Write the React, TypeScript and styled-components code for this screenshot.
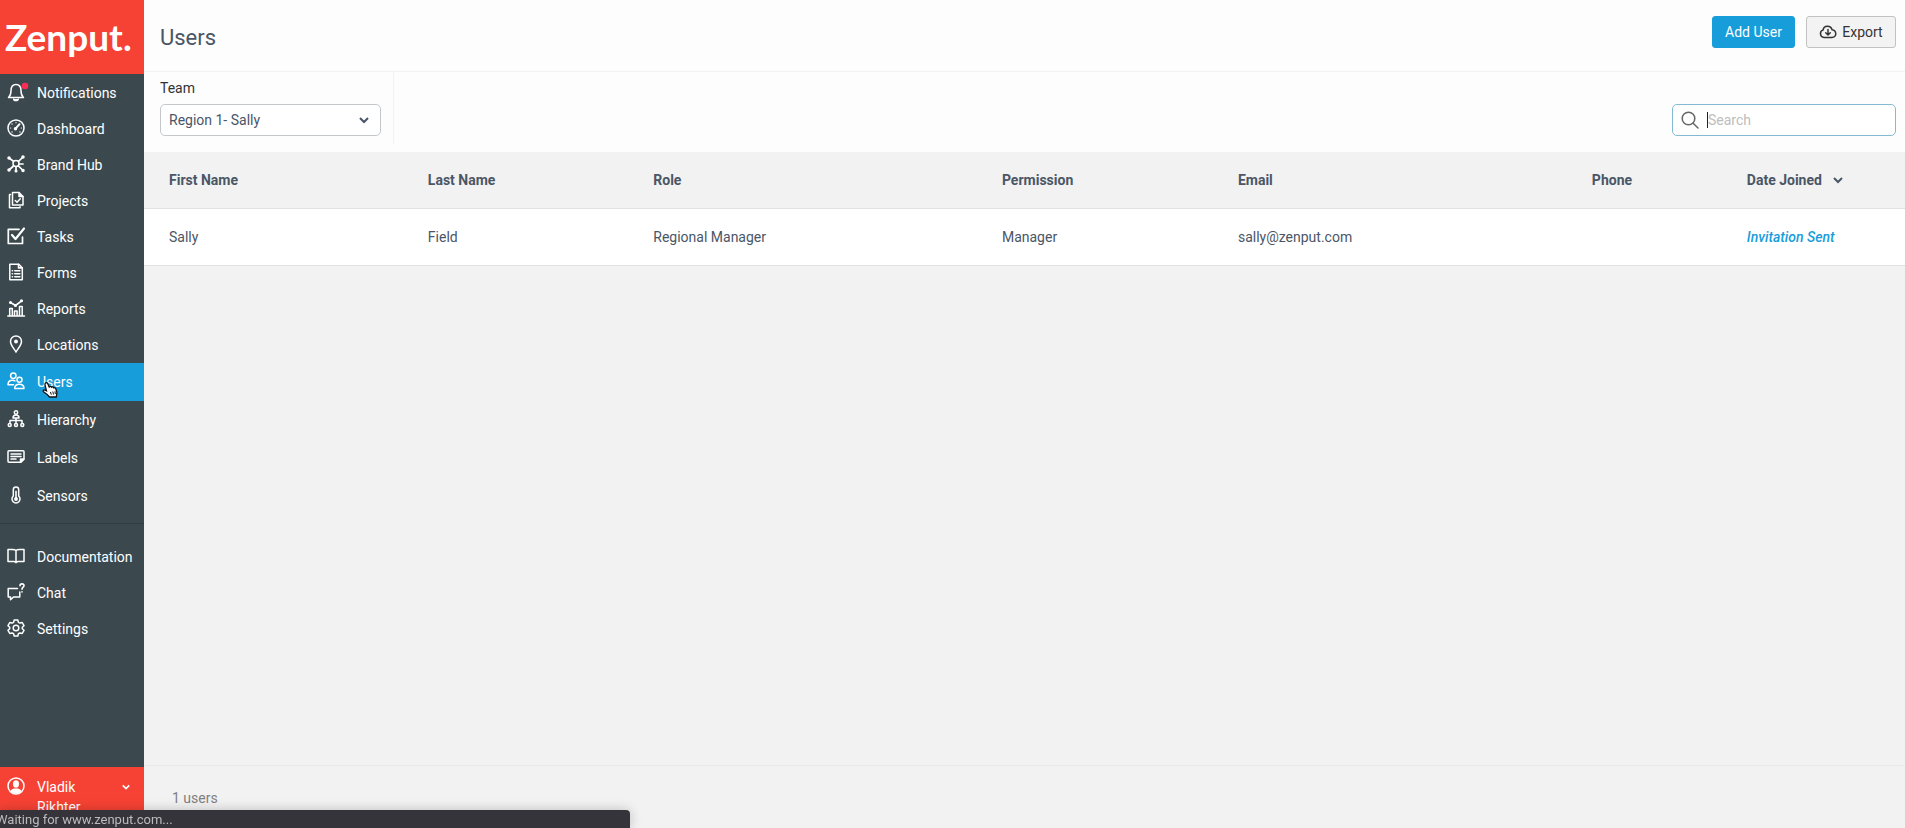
import React from 'react';
import styled, { createGlobalStyle } from 'styled-components';

const GlobalStyle = createGlobalStyle`
  * { box-sizing: border-box; }
  body { margin: 0; background: #f2f2f2; color: #4a5666; font: 14px/20px Roboto, "Liberation Sans", sans-serif; }
  button, input, select { font: inherit; margin: 0; }
`;

const Page = styled.div`
  display: flex;
  min-height: 100vh;
`;

const Sidebar = styled.aside`
  display: flex;
  flex-direction: column;
  flex: none;
  width: 144px;
  background: #3b494f;
  color: #fff;
`;

const Logo = styled.a`
  display: flex;
  align-items: center;
  height: 74px;
  padding-left: 5px;
  background: #f64234;
  color: #fff;
  font: 700 37px/44px Lato, sans-serif;
  text-decoration: none;
`;

const Nav = styled.nav`
  display: flex;
  flex-direction: column;
  flex: 1;
  padding-top: 1px;
`;

const NavList = styled.ul`
  list-style: none;
  margin: 0;
  padding: 0;
`;

const Divider = styled.hr`
  width: 100%;
  margin: 8px 0 15px;
  border: 0;
  border-top: 1px solid #303c41;
`;

const NavLink = styled.a<{ $active?: boolean; $tall?: boolean }>`
  position: relative;
  display: flex;
  align-items: center;
  gap: 12px;
  height: ${(p) => (p.$tall ? 38 : 36)}px;
  padding-left: 7px;
  background: ${(p) => (p.$active ? '#189ddb' : 'transparent')};
  color: #fff;
  font-size: 14px;
  text-decoration: none;
`;

const Glyph = styled.svg`
  flex: none;
  width: 18px;
  height: 18px;
  fill: none;
  stroke: currentColor;
  stroke-width: 1.5;
  stroke-linecap: round;
  stroke-linejoin: round;
`;

const NavGlyph = styled(Glyph)`
  margin-bottom: 3px;
`;

const Pointer = styled.svg`
  position: absolute;
  left: 42px;
  top: 18px;
  width: 17px;
  height: 18px;
`;

const Account = styled.button`
  display: flex;
  align-items: flex-start;
  gap: 12px;
  height: 61px;
  padding: 10px 14px 0 7px;
  border: 0;
  background: #f64234;
  color: #fff;
  text-align: left;
`;

const AccountName = styled.span`
  flex: 1;
  padding-right: 18px;
  line-height: 20px;
`;

const SmallChevron = styled.svg<{ $size: number }>`
  flex: none;
  width: ${(p) => p.$size}px;
  height: 20px;
  fill: none;
  stroke: currentColor;
  stroke-width: 2;
`;

const Main = styled.main`
  display: flex;
  flex-direction: column;
  flex: 1;
  min-width: 0;
`;

const Header = styled.header`
  display: flex;
  justify-content: space-between;
  height: 72px;
  padding: 16px 9px 0 16px;
  border-bottom: 1px solid #f0f2f3;
  background: #fdfdfd;
`;

const Title = styled.h1`
  margin: 8px 0 0;
  font-size: 22px;
  font-weight: 400;
  line-height: 28px;
`;

const Actions = styled.div`
  display: flex;
  gap: 11px;
`;

const Button = styled.button<{ $primary?: boolean }>`
  display: flex;
  align-items: center;
  justify-content: center;
  gap: 5px;
  min-width: ${(p) => (p.$primary ? 83 : 90)}px;
  height: 32px;
  padding: 0 12px;
  border: 1px solid ${(p) => (p.$primary ? '#189ddb' : '#c2c2c2')};
  border-radius: 3px;
  background: ${(p) => (p.$primary ? '#189ddb' : '#f3f3f3')};
  color: ${(p) => (p.$primary ? '#fff' : '#333')};
`;

const Filters = styled.div`
  display: flex;
  justify-content: space-between;
  height: 80px;
  padding: 0 9px 8px 16px;
  background: #fdfdfd;
`;

const TeamFilter = styled.div`
  display: flex;
  flex-direction: column;
  gap: 6px;
  padding: 6px 12px 0 0;
  border-right: 1px solid #eff3f4;
`;

const TeamLabel = styled.label`
  color: #333;
`;

const SelectBox = styled.div`
  display: grid;
  align-items: center;
  width: 221px;
  > * { grid-area: 1 / 1; }
  > svg { justify-self: end; margin-right: 12px; pointer-events: none; }
`;

const Select = styled.select`
  appearance: none;
  width: 100%;
  height: 32px;
  padding: 0 30px 0 8px;
  border: 1px solid #c4c7ca;
  border-radius: 5px;
  background: #fff;
  color: #4a5666;
`;

const SearchBox = styled.label`
  display: flex;
  align-items: center;
  width: 224px;
  height: 32px;
  margin-top: 32px;
  padding-left: 8px;
  border: 1px solid #84b9d2;
  border-radius: 5px;
  background: #fff;
  color: #666;
`;

const Caret = styled.span`
  width: 1px;
  height: 16px;
  margin-left: 8px;
  background: #222;
`;

const SearchInput = styled.input`
  flex: 1;
  min-width: 0;
  padding: 0;
  border: 0;
  outline: 0;
  background: transparent;
  &::placeholder { color: #bdbdbd; opacity: 1; }
`;

const Table = styled.table`
  width: 100%;
  table-layout: fixed;
  border-collapse: separate;
  border-spacing: 0;
`;

const Column = styled.col<{ $share?: number }>`
  width: ${(p) => (p.$share ? `${p.$share}%` : 'auto')};
`;

const HeadCell = styled.th`
  height: 57px;
  padding: 0 0 0 25px;
  border-bottom: 1px solid #e0e2e4;
  font-weight: 700;
  text-align: left;
`;

const Cell = styled.td`
  height: 57px;
  padding: 0 0 0 25px;
  border-bottom: 1px solid #e0e2e4;
  background: #fff;
`;

const SortButton = styled.button`
  display: flex;
  gap: 11px;
  padding: 0;
  border: 0;
  background: none;
  color: inherit;
  font-weight: 700;
`;

const Invitation = styled.a`
  color: #189ddb;
  font-style: italic;
  font-weight: 500;
  text-decoration: none;
`;

const Footer = styled.footer`
  height: 63px;
  margin-top: auto;
  padding: 22px 28px;
  border-top: 1px solid #e9e9e9;
  color: #808080;
`;

const StatusBar = styled.div`
  position: fixed;
  left: 0;
  bottom: 0;
  width: 630px;
  max-width: 100%;
  height: 18px;
  overflow: hidden;
  border-top-right-radius: 4px;
  background: #35343a;
  box-shadow: 0 0 12px rgba(0, 0, 0, 0.22);
  color: #bbb;
  font-size: 13px;
  line-height: 20px;
  text-indent: -4px;
`;

const icons: Record<string, React.ReactNode> = {
  Notifications: (
    <>
      <path d="M1.500 14.500c2-1.600 2.500-3.200 2.500-6.700C4 4 6 1.500 9 1.500s5 2.500 5 6.300c0 3.500.5 5.100 2.500 6.700Z" />
      <path d="M6.700 16a2.300 1.600 0 0 0 4.600 0" fill="currentColor" />
      <circle cx="18" cy="3" r="3.300" fill="#fb2f53" stroke="none" />
    </>
  ),
  Dashboard: (
    <>
      <circle cx="9" cy="9" r="8" />
      <path d="m8.500 9.700 4-4.500" strokeWidth="2" />
      <path d="M9 3.500v.2M5 5l.1.1M3.500 9h.2M14.300 9h.2M5 13l.1-.1M13 13l-.1-.1" strokeWidth="1.200" />
      <circle cx="8.500" cy="9.700" r="1" fill="currentColor" />
    </>
  ),
  'Brand Hub': (
    <>
      <circle cx="9" cy="8.500" r="3" />
      <path d="M6.500 6.300 2 3M11.500 6.300 16 2M6.500 11 2 15M11.500 11l4.500 4.500M9 11.700V16M12 9h4" strokeWidth="1.700" />
      <g fill="currentColor">
        <circle cx="2" cy="3" r="1" />
        <circle cx="16" cy="2" r="1" />
        <circle cx="2" cy="15" r="1" />
        <circle cx="16" cy="15.500" r="1" />
        <circle cx="9" cy="16" r=".8" />
      </g>
    </>
  ),
  Projects: (
    <>
      <path d="M5.500 1.500H12l4 4V14H5.500Z" />
      <path d="M12 1.500v4h4" fill="currentColor" />
      <path d="M3.500 3.500h-1v13.300h10.500v-1M8.300 9.500l1.700 1.700 3.300-3.500" />
    </>
  ),
  Tasks: (
    <>
      <path d="M12 2.300H1.300v14.200h14.200V10" strokeWidth="1.700" />
      <path d="m5 8 3.500 4L17 1.500" strokeWidth="2.200" />
    </>
  ),
  Forms: (
    <>
      <path d="M2.800 1.200h9l3.500 3.500v12H2.800Z" />
      <path d="M11.500 1.200v3.700h3.800M5.300 7.700h.2M7.800 7.700h5M5.300 10.700h.2M7.800 10.700h5M5.300 13.700h.2M7.800 13.700h5" strokeWidth="1.600" />
    </>
  ),
  Reports: (
    <>
      <path d="M.8 17h16.700M2.700 17V9.500h2.600V17M7.500 17v-5h2.600v5M12.500 17V7.500h2.700V17" />
      <path d="m3.500 3.500 5 3 6-4.500" strokeWidth="1.600" />
      <g fill="currentColor">
        <circle cx="3.500" cy="3.500" r=".8" />
        <circle cx="8.500" cy="6.500" r=".8" />
        <circle cx="14.500" cy="1.800" r=".8" />
      </g>
    </>
  ),
  Locations: (
    <>
      <path d="M9 17C6.500 13 3.500 9.700 3.500 6.400a5.500 5.500 0 0 1 11 0C14.500 9.700 11.500 13 9 17Z" />
      <circle cx="9" cy="6.500" r="1.200" fill="currentColor" />
    </>
  ),
  Users: (
    <>
      <circle cx="6.300" cy="3.800" r="2.700" />
      <circle cx="12.500" cy="7.800" r="2.500" />
      <path d="M6.500 12.800H1c0-3.300 1.800-4.500 4.500-4.500 1 0 1.800.2 2.500.6M7.700 16.500c0-3.300 1.700-4.300 4.600-4.300s4.700 1 4.700 4.300Z" />
    </>
  ),
  Hierarchy: (
    <>
      <circle cx="9" cy="2.500" r="1.700" />
      <path d="M6 8c0-2.300 1-3 3-3s3 .7 3 3ZM9 8v5M3 13v-2.500h12V13" />
      <circle cx="2.700" cy="15" r="1.500" />
      <circle cx="9" cy="15" r="1.500" />
      <circle cx="15.300" cy="15" r="1.500" />
    </>
  ),
  Labels: (
    <>
      <path d="M2 2.800h14a1 1 0 0 1 1 1v7.400l-3 3H2a1 1 0 0 1-1-1V3.800a1 1 0 0 1 1-1Z" />
      <path d="M4 6h10M4 8.500h10M4 11h5" />
      <path d="M13.500 14v-3h3.300Z" fill="currentColor" />
    </>
  ),
  Sensors: (
    <>
      <path d="M6.300 10V3.700a2.700 2.700 0 0 1 5.400 0V10a4 4 0 1 1-5.400 0Z" />
      <path d="M9 5.500V13" strokeWidth="1.600" />
      <circle cx="9" cy="13" r="1.200" fill="currentColor" />
    </>
  ),
  Documentation: <path d="M9 3.500C8 2.500 7 2.500 5.500 2.500H1v12h6c1 0 2 .4 2 1.200 0-.8 1-1.200 2-1.200h6v-12h-4.500C11 2.500 10 2.500 9 3.500Zm0 0v12" />,
  Chat: (
    <>
      <path d="M10.500 5.500H1.200V14h2.300v2.800L6.500 14h6.300V9" />
      <path d="M13 2.700c0-2.500 4-2.500 4 0 0 1.500-2 1.500-2 3.500M15 8.800v.1" strokeWidth="1.600" />
    </>
  ),
  Settings: (
    <>
      <path d="M7.200 1h3.600l.6 2.300 1.500.8 2.300-.6L17 6.700 15.300 8.300v1.400L17 11.300l-1.800 3.200-2.300-.6-1.500.8-.6 2.300H7.200l-.6-2.300-1.500-.8-2.300.6L1 11.300l1.700-1.600V8.300L1 6.700l1.800-3.200 2.300.6 1.500-.8Z" />
      <circle cx="9" cy="9" r="2.800" />
    </>
  ),
};

const mainItems = ['Notifications', 'Dashboard', 'Brand Hub', 'Projects', 'Tasks', 'Forms', 'Reports', 'Locations'];
const adminItems = ['Users', 'Hierarchy', 'Labels', 'Sensors'];
const helpItems = ['Documentation', 'Chat', 'Settings'];
const headings = ['First Name', 'Last Name', 'Role', 'Permission', 'Email', 'Phone'];

function NavItem({ name, tall }: { name: string; tall?: boolean }) {
  const active = name === 'Users';
  return (
    <li>
      <NavLink href={`#${name.toLowerCase().replace(' ', '-')}`} $active={active} $tall={tall} aria-current={active ? 'page' : undefined}>
        <NavGlyph viewBox="0 0 18 18" overflow="visible" aria-hidden="true">{icons[name]}</NavGlyph>
        {name}
        {active && (
          <Pointer viewBox="0 0 17 18" aria-hidden="true">
            <path d="M3.500 2c1-.8 2 0 2.400 1l1.300 3c.8-.9 1.900-.6 2.300.2.900-.6 1.800-.3 2.200.6 1-.4 1.900.1 2.200 1.200l1 3.500-.6 4.500H7.500C5.700 13.500 3.500 12 1.500 10.700c-.8-.6-.2-2 1-1.700l2 .8L3 4c-.2-.8 0-1.500.5-2Z" fill="#fff" stroke="#111" strokeWidth="1.300" />
            <path d="m8.500 11 .8 2.700M10.800 10.500l.7 3M13 10.300l.3 2.700" stroke="#111" />
          </Pointer>
        )}
      </NavLink>
    </li>
  );
}

function Chevron({ size }: { size: number }) {
  return (
    <SmallChevron $size={size} viewBox="0 0 10 20" aria-hidden="true">
      <path d="m1 8 4 4 4-4" />
    </SmallChevron>
  );
}

export default function App() {
  return (
    <>
      <GlobalStyle />
      <Page>
        <Sidebar>
          <Logo href="#home">Zenput.</Logo>
          <Nav>
            <NavList>
              {mainItems.map((n) => <NavItem key={n} name={n} />)}
              {adminItems.map((n) => <NavItem key={n} name={n} tall />)}
            </NavList>
            <Divider />
            <NavList>{helpItems.map((n) => <NavItem key={n} name={n} />)}</NavList>
          </Nav>
          <Account type="button">
            <Glyph viewBox="0 0 18 18" aria-hidden="true">
              <circle cx="9" cy="9" r="8" />
              <ellipse cx="9" cy="7" rx="3" ry="3.700" fill="currentColor" stroke="none" />
              <path d="M3.500 14c1-2 3-2.500 5.500-2.500s4.500.5 5.500 2.500c-3 3.500-8 3.500-11 0Z" fill="currentColor" stroke="none" />
            </Glyph>
            <AccountName>Vladik Rikhter</AccountName>
            <Chevron size={8} />
          </Account>
        </Sidebar>
        <Main>
          <Header>
            <Title>Users</Title>
            <Actions>
              <Button type="button" $primary>Add User</Button>
              <Button type="button">
                <Glyph viewBox="0 0 18 18" aria-hidden="true">
                  <path d="M5 14.500a3.900 3.900 0 0 1-.8-7.600C4.500 2 12 2 13 6.700c5 .5 5 7.800 0 7.800Z" />
                  <path d="M9 6.500V12M6.700 9.800 9 12l2.300-2.200" />
                </Glyph>
                Export
              </Button>
            </Actions>
          </Header>
          <Filters>
            <TeamFilter>
              <TeamLabel htmlFor="team">Team</TeamLabel>
              <SelectBox>
                <Select id="team" defaultValue="r1"><option value="r1">Region 1- Sally</option></Select>
                <Chevron size={10} />
              </SelectBox>
            </TeamFilter>
            <SearchBox>
              <Glyph viewBox="0 0 18 18" aria-hidden="true">
                <circle cx="7.500" cy="7.500" r="6.300" />
                <path d="m12.200 12.200 4.800 4.800" />
              </Glyph>
              <Caret />
              <SearchInput type="search" placeholder="Search" aria-label="Search" />
            </SearchBox>
          </Filters>
          <Table>
            <colgroup>
              <Column $share={14.7} />
              <Column $share={12.8} />
              <Column $share={19.8} />
              <Column $share={13.4} />
              <Column $share={20.1} />
              <Column $share={8.8} />
              <Column />
            </colgroup>
            <thead>
              <tr>
                {headings.map((h) => <HeadCell key={h} scope="col">{h}</HeadCell>)}
                <HeadCell scope="col" aria-sort="descending">
                  <SortButton type="button">Date Joined<Chevron size={10} /></SortButton>
                </HeadCell>
              </tr>
            </thead>
            <tbody>
              <tr>
                <Cell>Sally</Cell>
                <Cell>Field</Cell>
                <Cell>Regional Manager</Cell>
                <Cell>Manager</Cell>
                <Cell>sally@zenput.com</Cell>
                <Cell />
                <Cell><Invitation href="#invitation">Invitation Sent</Invitation></Cell>
              </tr>
            </tbody>
          </Table>
          <Footer>1 users</Footer>
        </Main>
      </Page>
      <StatusBar role="status">Waiting for www.zenput.com...</StatusBar>
    </>
  );
}
